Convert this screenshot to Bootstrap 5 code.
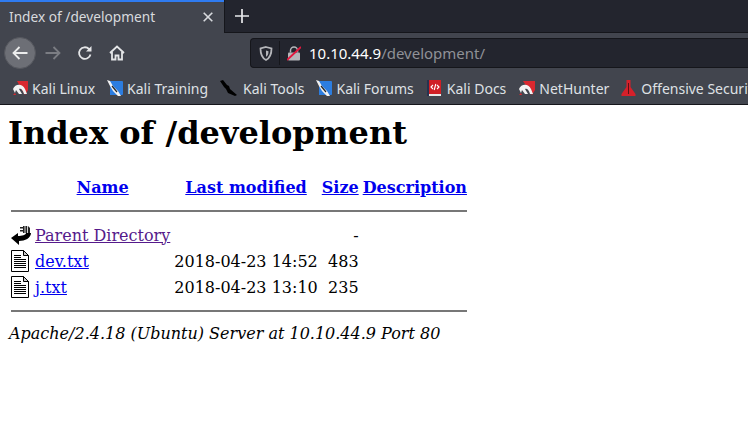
<!DOCTYPE html>
<html lang="en">
<head>
  <meta charset="UTF-8">
  <meta name="viewport" content="width=device-width, initial-scale=1.0">
  <title>Index of /development</title>
  <link rel="stylesheet" href="https://cdn.jsdelivr.net/npm/bootstrap@5.3.0/dist/css/bootstrap.min.css">
  <style>
    html, body { height: 100%; }
    body { background: #fff; overflow: hidden; }
    .browser { font-family: "Noto Sans", sans-serif; color: #e6e7ea; }
    .tabstrip { height: 33px; background: #23252e; }
    .tabitem { width: 224px; background: #42454e; border-top: 2px solid #2f7bf0; font-size: 13.7px; padding: 0 11px 1px 9px; color: #d8dade; }
    .tabrest { border-bottom: 1px solid #15161b; border-left: 1px solid #15161b; }
    .tabnew { width: 33px; height: 32px; }
    .toolbar { height: 37px; background: #42454e; padding-top: 3px; }
    .navbtn { width: 32px; height: 32px; flex: none; }
    .navbtn-active { background: #6d6f76; border: 1px solid #55575e; border-radius: 50%; margin-left: 4px; margin-right: 1px; }
    .urlbar { margin-left: 117px; flex: 1; height: 30px; background: #23252e; border: 1px solid #15161b; border-right: 0; border-radius: 4px 0 0 4px; font-size: 15px; }
    .urlsep { width: 1px; height: 24px; background: #15161b; margin: 0 7px 0 6px; }
    .urlhost { color: #fff; margin-left: 8px; }
    .urlpath { color: #8f9197; }
    .bookmarks { height: 35px; background: #42454e; border-bottom: 1px solid #15161b; font-size: 14px; padding: 2px 0 0 12px; gap: 12px; white-space: nowrap; color: #dfe1e5; overflow: hidden; }
    .bookmark { gap: 4px; }
    .bookmark-gap5 { gap: 5px; }
    .bookmark-gap6 { gap: 6px; }
    .page { font-family: "DejaVu Serif", serif; font-size: 16px; color: #000; padding: 8px; line-height: normal; }
    .page h1 { font-size: 32px; font-weight: 700; line-height: 38px; margin: 1px 0 21px; }
    .listing { border-collapse: separate; border-spacing: 2px; }
    .listing th, .listing td { padding: 1px; height: 24px; line-height: 19px; white-space: nowrap; }
    .listing th { text-align: center; font-weight: 700; }
    .listing a { color: #00e; text-decoration: underline; }
    .listing a.seen { color: #551a8b; }
    .listing .rule { height: auto; }
    .listing hr { margin: 8px 0; border: 0; border-top: 2px solid #777; opacity: 1; }
    .cell-icon { width: 20px; }
    .cell-icon svg { display: block; }
    .cell-size { text-align: right; }
    .sigline { font-style: italic; margin: 1px 0 0 1px; line-height: 19px; }
  </style>
</head>
<body>
  <div class="browser">
    <div class="tabstrip d-flex">
      <div class="tabitem d-flex align-items-center justify-content-between">
        <span>Index of /development</span>
        <svg width="10" height="10" viewBox="0 0 10 10"><path d="M.7.7l8.600 8.600M9.300.7L.7 9.300" stroke="#d8dade" stroke-width="1.600"/></svg>
      </div>
      <div class="tabrest flex-grow-1">
        <div class="tabnew d-flex align-items-center justify-content-center">
          <svg width="14" height="14" viewBox="0 0 14 14"><path d="M7 0v14M0 7h14" stroke="#e8e9ec" stroke-width="1.700"/></svg>
        </div>
      </div>
    </div>
    <div class="toolbar d-flex align-items-center">
      <div class="navbtn navbtn-active d-flex align-items-center justify-content-center">
        <svg width="16" height="14" viewBox="0 0 16 14"><path d="M15.500 7H1.500M7.500 1L1.500 7l6 6" fill="none" stroke="#eceded" stroke-width="1.800"/></svg>
      </div>
      <div class="navbtn d-flex align-items-center justify-content-center">
        <svg width="16" height="14" viewBox="0 0 16 14"><path d="M.5 7h14M8.500 1l6 6-6 6" fill="none" stroke="#7b7d83" stroke-width="1.800"/></svg>
      </div>
      <div class="navbtn d-flex align-items-center justify-content-center">
        <svg width="16" height="16" viewBox="0 0 16 16"><path d="M13.500 9.500A5.800 5.800 0 1 1 12 4l1.500 1.500" fill="none" stroke="#e4e5e7" stroke-width="1.800"/><path d="M14.500 1v5.500H9z" fill="#e4e5e7"/></svg>
      </div>
      <div class="navbtn d-flex align-items-center justify-content-center">
        <svg width="16" height="16" viewBox="0 0 16 16"><path d="M1 8l7-6.500L15 8M3 7v7.500h3.500v-4h3v4H13V7" fill="none" stroke="#e4e5e7" stroke-width="1.800"/></svg>
      </div>
      <div class="urlbar d-flex align-items-center">
        <svg class="ms-2" width="14" height="15" viewBox="0 0 14 15"><path d="M7 1l5.500 1.500c0 6-1.500 9.500-5.500 11.500C3 12 1.500 8.500 1.500 2.500z" fill="none" stroke="#b5b6ba" stroke-width="1.800"/><path d="M7 4.500l2.500.7C9.500 8 8.800 9.700 7 10.800z" fill="#b5b6ba"/></svg>
        <span class="urlsep"></span>
        <svg width="14" height="15" viewBox="0 0 14 15"><rect x="1" y="6.500" width="12" height="8" rx="1" fill="#b5b6ba"/><path d="M3.500 6.500V4.500a3.500 3.500 0 0 1 7 0v2" fill="none" stroke="#b5b6ba" stroke-width="1.500"/><path d="M0 14L14 1" stroke="#e3173e" stroke-width="1.800"/></svg>
        <span class="urlhost">10.10.44.9<span class="urlpath">/development/</span></span>
      </div>
    </div>
    <div class="bookmarks d-flex align-items-center">
      <div class="bookmark d-flex align-items-center">
        <svg width="16" height="16" viewBox="0 0 16 16"><path d="M5 1h11v9l-3 5z" fill="#d9282f"/><path d="M1 9c2-5 9-6 12 0l2 5h-3c-1-4-3-6-5-5l3 5H7L4 10l-1 3z" fill="#f2f2f2"/><path d="M1 15l2-2 1 2z" fill="#d9282f"/></svg>
        <span>Kali Linux</span>
      </div>
      <div class="bookmark d-flex align-items-center">
        <svg width="16" height="16" viewBox="0 0 16 16"><path d="M3 1h12a1 1 0 0 1 1 1v12a1 1 0 0 1-1 1H3z" fill="#2c7de0"/><path d="M0 0l3 1 3 5 5 5 3 5h-3L6 11 3 6z" fill="#f2f2f2"/><path d="M5 6l5 6" stroke="#222" stroke-width="1.200"/></svg>
        <span>Kali Training</span>
      </div>
      <div class="bookmark bookmark-gap6 d-flex align-items-center">
        <svg width="17" height="16" viewBox="0 0 17 16"><path d="M0 1l3-1 4 5 2 1 1 3 7 6-2 1-7-3-2-4-2-2z" fill="#000"/></svg>
        <span>Kali Tools</span>
      </div>
      <div class="bookmark d-flex align-items-center">
        <svg width="16" height="16" viewBox="0 0 16 16"><path d="M3 1h12a1 1 0 0 1 1 1v12a1 1 0 0 1-1 1H3z" fill="#2c7de0"/><path d="M0 0l3 1 3 5 5 5 3 5h-3L6 11 3 6z" fill="#f2f2f2"/><path d="M5 6l5 6" stroke="#222" stroke-width="1.200"/></svg>
        <span>Kali Forums</span>
      </div>
      <div class="bookmark bookmark-gap6 d-flex align-items-center">
        <svg width="15" height="16" viewBox="0 0 15 16"><rect x="1" y="0" width="14" height="14" fill="#d01f25"/><rect x="1" y="14" width="14" height="2" fill="#e8e8e8"/><rect x="1" width="2" height="16" fill="#27324f"/><path d="M7 5L5 7l2 2M11 5l2 2-2 2M8.200 10l1.600-6" fill="none" stroke="#fff" stroke-width="1.100"/></svg>
        <span>Kali Docs</span>
      </div>
      <div class="bookmark d-flex align-items-center">
        <svg width="17" height="16" viewBox="0 0 17 16"><path d="M5 1h12v9l-3 5z" fill="#d9282f"/><path d="M1 9c2-5 9-6 12 0l2 5h-3c-1-4-3-6-5-5l3 5H7L4 10l-1 3z" fill="#f2f2f2"/><path d="M1 15l2-2 1 2z" fill="#d9282f"/></svg>
        <span>NetHunter</span>
      </div>
      <div class="bookmark bookmark-gap5 d-flex align-items-center">
        <svg width="15" height="16" viewBox="0 0 15 16"><path d="M5.500 0h4v7l5 7v2H.5v-2l5-7z" fill="#d5202a"/><path d="M7 3h1v11H7z" fill="#5a1016"/></svg>
        <span>Offensive Security</span>
      </div>
    </div>
  </div>

  <div class="page">
    <h1>Index of /development</h1>
    <table class="listing">
      <tr>
        <th class="cell-icon"></th>
        <th><a href="#">Name</a></th>
        <th><a href="#">Last modified</a></th>
        <th><a href="#">Size</a></th>
        <th><a href="#">Description</a></th>
      </tr>
      <tr><th colspan="5" class="rule"><hr></th></tr>
      <tr>
        <td class="cell-icon">
          <svg width="20" height="22" viewBox="0 0 20 22"><path d="M0 14l7-5v3c4 0 8-1 8-3l5 0c0 5-6 8-12 8v4z" fill="#000"/><path d="M12 2h5l2 2v5h-7z" fill="#222"/><path d="M9 3h3v1.500H9zM9 6h3v1.500H9z" fill="#222"/><path d="M14 2v7M16.500 2v7" stroke="#fff" stroke-width=".8"/></svg>
        </td>
        <td><a class="seen" href="#">Parent Directory</a></td>
        <td>&nbsp;</td>
        <td class="cell-size">-</td>
        <td>&nbsp;</td>
      </tr>
      <tr>
        <td class="cell-icon">
          <svg width="20" height="22" viewBox="0 0 20 22"><path d="M.5.500h12l5 5v16H.5z" fill="#fff" stroke="#000"/><path d="M12.500.500v5h5z" fill="#ccc" stroke="#000"/><path d="M3 5.500h7M3 7.500h7M3 9.500h12M3 11.500h12M3 13.500h12M3 15.500h12M3 17.500h12" stroke="#000"/></svg>
        </td>
        <td><a href="#">dev.txt</a></td>
        <td>2018-04-23 14:52</td>
        <td class="cell-size">483</td>
        <td>&nbsp;</td>
      </tr>
      <tr>
        <td class="cell-icon">
          <svg width="20" height="22" viewBox="0 0 20 22"><path d="M.5.500h12l5 5v16H.5z" fill="#fff" stroke="#000"/><path d="M12.500.500v5h5z" fill="#ccc" stroke="#000"/><path d="M3 5.500h7M3 7.500h7M3 9.500h12M3 11.500h12M3 13.500h12M3 15.500h12M3 17.500h12" stroke="#000"/></svg>
        </td>
        <td><a href="#">j.txt</a></td>
        <td>2018-04-23 13:10</td>
        <td class="cell-size">235</td>
        <td>&nbsp;</td>
      </tr>
      <tr><th colspan="5" class="rule"><hr></th></tr>
    </table>
    <p class="sigline">Apache/2.4.18 (Ubuntu) Server at 10.10.44.9 Port 80</p>
  </div>

  <script src="https://cdn.jsdelivr.net/npm/bootstrap@5.3.0/dist/js/bootstrap.bundle.min.js"></script>
</body>
</html>
